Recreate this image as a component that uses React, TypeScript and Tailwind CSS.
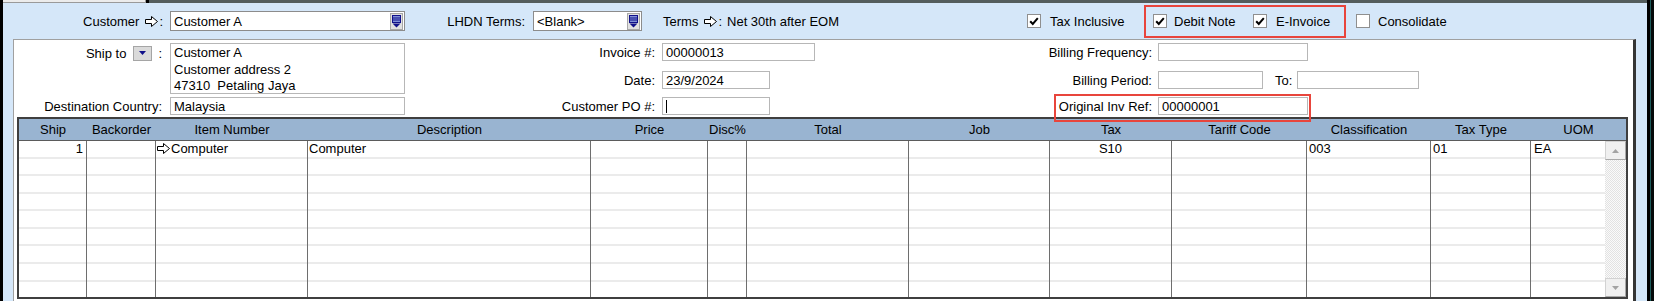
import React from "react";

function HollowArrow() {
  return (
    <svg width="13" height="11" viewBox="0 0 13 11" className="shrink-0">
      <path
        d="M0.5 3.5H6.5V0.5L12.5 5.5L6.5 10.5V7.5H0.5Z"
        fill="#ffffff"
        stroke="#000000"
        strokeWidth="1"
      />
    </svg>
  );
}

function ComboButton() {
  return (
    <div className="w-[13px] h-[17px] bg-[#e1e1e1] border border-[#a8a8a8] flex items-center justify-center shrink-0">
      <svg width="9" height="13" viewBox="0 0 9 13">
        <rect x="0.5" y="0.5" width="8" height="7" fill="#8090d8" stroke="#10108a" strokeWidth="1" />
        <rect x="1" y="2.5" width="7" height="1" fill="#10108a" />
        <rect x="1" y="4.5" width="7" height="1" fill="#10108a" />
        <path d="M0.5 8.5H8.5L4.5 12.5Z" fill="#10108a" />
      </svg>
    </div>
  );
}

function Combo({ w, text }: { w: string; text: string }) {
  return (
    <div className={`${w} h-[20px] bg-white border border-[#8c8c8c] flex items-center justify-between pl-[3px] pr-[1px] shrink-0`}>
      <span>{text}</span>
      <ComboButton />
    </div>
  );
}

function CheckBox({ checked }: { checked?: boolean }) {
  return (
    <div className="w-[14px] h-[14px] bg-white border border-[#8f8f8f] flex items-center justify-center shrink-0">
      {checked && (
        <svg width="10" height="9" viewBox="0 0 10 9">
          <path d="M1.2 4.2L3.8 7L8.8 1.2" fill="none" stroke="#000000" strokeWidth="2" />
        </svg>
      )}
    </div>
  );
}

function Field({ w, text, cursor }: { w: string; text?: string; cursor?: boolean }) {
  return (
    <div className={`${w} h-[18px] bg-white border border-[#b7b7b7] flex items-center pl-[3px] shrink-0`}>
      {cursor && <div className="w-[1px] h-[13px] bg-black" />}
      {text && <span>{text}</span>}
    </div>
  );
}

const headerCols = [
  { name: "Ship", w: "w-[68px]" },
  { name: "Backorder", w: "w-[69px]" },
  { name: "Item Number", w: "w-[152px]" },
  { name: "Description", w: "w-[283px]" },
  { name: "Price", w: "w-[117px]" },
  { name: "Disc%", w: "w-[39px]" },
  { name: "Total", w: "w-[162px]" },
  { name: "Job", w: "w-[141px]" },
  { name: "Tax", w: "w-[122px]" },
  { name: "Tariff Code", w: "w-[135px]" },
  { name: "Classification", w: "w-[124px]" },
  { name: "Tax Type", w: "w-[100px]" },
  { name: "UOM", w: "w-[95px]" },
];

const bodyCols: { w: string; last?: boolean; content?: React.ReactNode }[] = [
  { w: "w-[68px]", content: <span className="w-full text-right pr-[3px]">1</span> },
  { w: "w-[69px]" },
  {
    w: "w-[152px]",
    content: (
      <span className="flex items-center pl-[1px]">
        <HollowArrow />
        <span className="ml-[1px]">Computer</span>
      </span>
    ),
  },
  { w: "w-[283px]", content: <span className="pl-[1px]">Computer</span> },
  { w: "w-[117px]" },
  { w: "w-[39px]" },
  { w: "w-[162px]" },
  { w: "w-[141px]" },
  { w: "w-[122px]", content: <span className="w-full text-center">S10</span> },
  { w: "w-[135px]" },
  { w: "w-[124px]", content: <span className="pl-[2px]">003</span> },
  { w: "w-[100px]", content: <span className="pl-[2px]">01</span> },
  { w: "w-[74px]", last: true, content: <span className="pl-[3px]">EA</span> },
];

const rowIdx = [0, 1, 2, 3, 4, 5, 6, 7, 8];

function ScrollArrow({ up }: { up?: boolean }) {
  return (
    <div className="h-[19px] bg-[#f0f0f0] border border-[#d2d2d2] border-r-[#a9a9a9] border-b-[#a9a9a9] flex items-center justify-center">
      <svg width="7" height="4" viewBox="0 0 7 4">
        {up ? <path d="M0 4H7L3.5 0Z" fill="#a3a3a3" /> : <path d="M0 0H7L3.5 4Z" fill="#a3a3a3" />}
      </svg>
    </div>
  );
}

export default function App() {
  return (
    <div className="w-[1654px] h-[301px] overflow-hidden flex bg-black font-['Liberation_Sans',Arial,sans-serif] text-[13px] leading-[15px] text-black">
      <div className="w-[3px] shrink-0 bg-black" />
      <div className="w-[1644px] shrink-0 flex flex-col bg-[#d5e7f9]">
        {/* top strip */}
        <div className="h-[3px] flex shrink-0">
          <div className="w-[143px] bg-[#ececec] border-b border-r border-[#9a9a9a]" />
          <div className="w-[3px] bg-black" />
          <div className="flex-1 bg-[#545d5d]" />
        </div>

        {/* top bar */}
        <div className="h-[36px] flex items-center shrink-0">
          <div className="w-[160px] flex items-center justify-end shrink-0">
            <span>Customer</span>
            <span className="ml-[6px] flex">
              <HollowArrow />
            </span>
            <span className="ml-[1px]">:</span>
          </div>
          <div className="ml-[7px]">
            <Combo w="w-[235px]" text="Customer A" />
          </div>
          <div className="w-[120px] flex justify-end shrink-0">LHDN Terms:</div>
          <div className="ml-[8px]">
            <Combo w="w-[109px]" text="<Blank>" />
          </div>
          <div className="ml-[21px] w-[364px] flex items-center shrink-0">
            <span>Terms</span>
            <span className="ml-[6px] flex">
              <HollowArrow />
            </span>
            <span className="ml-[1px]">:</span>
            <span className="ml-[5px]">Net 30th after EOM</span>
          </div>
          <div className="w-[117px] flex items-center shrink-0">
            <CheckBox checked />
            <span className="ml-[9px]">Tax Inclusive</span>
          </div>
          <div className="w-[202px] h-[33px] border-2 border-[#e8453c] flex items-center pl-[7px] shrink-0">
            <CheckBox checked />
            <span className="ml-[7px] w-[64px]">Debit Note</span>
            <span className="ml-[15px] flex">
              <CheckBox checked />
            </span>
            <span className="ml-[9px]">E-Invoice</span>
          </div>
          <div className="ml-[10px] flex items-center">
            <CheckBox />
            <span className="ml-[8px]">Consolidate</span>
          </div>
        </div>

        {/* panel */}
        <div className="flex-1 min-h-0 pl-[10px] pr-[11px]">
          <div className="w-[1623px] h-[270px] bg-white border-t border-l border-[#a0a0a0] border-r-[3px] border-r-[#353535] flex flex-col">
            {/* form */}
            <div className="h-[77px] flex pt-[3px] shrink-0">
              {/* column 1 */}
              <div className="w-[391px] grid grid-cols-[148px_235px] gap-x-[8px] gap-y-[3px] content-start shrink-0">
                <div className="h-[51px] flex justify-end items-start">
                  <div className="h-[20px] flex items-center">
                    <span>Ship to</span>
                    <div className="ml-[7px] w-[19px] h-[15px] bg-[#dadada] border border-[#a5a5a5] flex items-center justify-center">
                      <svg width="7" height="4" viewBox="0 0 7 4">
                        <path d="M0 0H7L3.5 4Z" fill="#10108a" />
                      </svg>
                    </div>
                    <span className="ml-[6px]">:</span>
                  </div>
                </div>
                <div className="h-[51px] bg-white border border-[#b7b7b7] pl-[3px] pt-[1px] leading-[16.5px]">
                  <div>Customer A</div>
                  <div>Customer address 2</div>
                  <div className="whitespace-pre">47310  Petaling Jaya</div>
                </div>
                <div className="h-[18px] flex items-center justify-end">Destination Country:</div>
                <Field w="w-[235px]" text="Malaysia" />
              </div>

              {/* column 2 */}
              <div className="w-[410px] flex flex-col shrink-0">
                <div className="h-[18px] flex items-center">
                  <div className="w-[250px] text-right">Invoice #:</div>
                  <div className="ml-[7px]">
                    <Field w="w-[153px]" text="00000013" />
                  </div>
                </div>
                <div className="h-[18px] mt-[10px] flex items-center">
                  <div className="w-[250px] text-right">Date:</div>
                  <div className="ml-[7px]">
                    <Field w="w-[108px]" text="23/9/2024" />
                  </div>
                </div>
                <div className="h-[18px] mt-[8px] flex items-center">
                  <div className="w-[250px] text-right">Customer PO #:</div>
                  <div className="ml-[7px]">
                    <Field w="w-[108px]" cursor />
                  </div>
                </div>
              </div>

              {/* column 3 */}
              <div className="flex flex-col">
                <div className="h-[18px] flex items-center">
                  <div className="w-[337px] text-right">Billing Frequency:</div>
                  <div className="ml-[6px]">
                    <Field w="w-[150px]" />
                  </div>
                </div>
                <div className="h-[18px] mt-[10px] flex items-center">
                  <div className="w-[337px] text-right">Billing Period:</div>
                  <div className="ml-[6px]">
                    <Field w="w-[105px]" />
                  </div>
                  <span className="ml-[12px]">To:</span>
                  <div className="ml-[5px]">
                    <Field w="w-[122px]" />
                  </div>
                </div>
                <div className="relative h-[18px] mt-[8px] flex items-center">
                  <div className="w-[337px] text-right">Original Inv Ref:</div>
                  <div className="ml-[6px]">
                    <Field w="w-[150px]" text="00000001" />
                  </div>
                  <div className="absolute left-[239px] top-[-3px] w-[257px] h-[28px] border-2 border-[#e8453c] z-10 pointer-events-none" />
                </div>
              </div>
            </div>

            {/* table */}
            <div className="ml-[3px] w-[1611px] border-2 border-[#3f3f3f] flex flex-col shrink-0">
              <div className="h-[22px] flex bg-[#99b4d1] border-b border-[#5b5b5b]">
                {headerCols.map((c) => (
                  <div key={c.name} className={`${c.w} shrink-0 flex items-center justify-center`}>
                    {c.name}
                  </div>
                ))}
              </div>
              <div className="h-[156px] flex">
                {bodyCols.map((c, ci) => (
                  <div
                    key={ci}
                    className={`${c.w} shrink-0 flex flex-col ${c.last ? "" : "border-r border-[#6e6e6e]"}`}
                  >
                    {rowIdx.map((r) => (
                      <div
                        key={r}
                        className={`flex-1 min-h-0 flex items-center ${r === 8 ? "" : "border-b-2 border-[#ebebeb]"}`}
                      >
                        {r === 0 ? c.content : null}
                      </div>
                    ))}
                  </div>
                ))}
                <div className="w-[21px] shrink-0 flex flex-col">
                  <ScrollArrow up />
                  <div className="flex-1 bg-[repeating-conic-gradient(#e2e2e2_0_25%,#fafafa_0_50%)] bg-[length:2px_2px]" />
                  <ScrollArrow />
                </div>
              </div>
            </div>
          </div>
        </div>
      </div>
      <div className="w-[7px] shrink-0 flex">
        <div className="w-[3px] bg-black" />
        <div className="w-[1px] bg-[#1d5a5a]" />
        <div className="flex-1 bg-[#050a0a]" />
      </div>
    </div>
  );
}
